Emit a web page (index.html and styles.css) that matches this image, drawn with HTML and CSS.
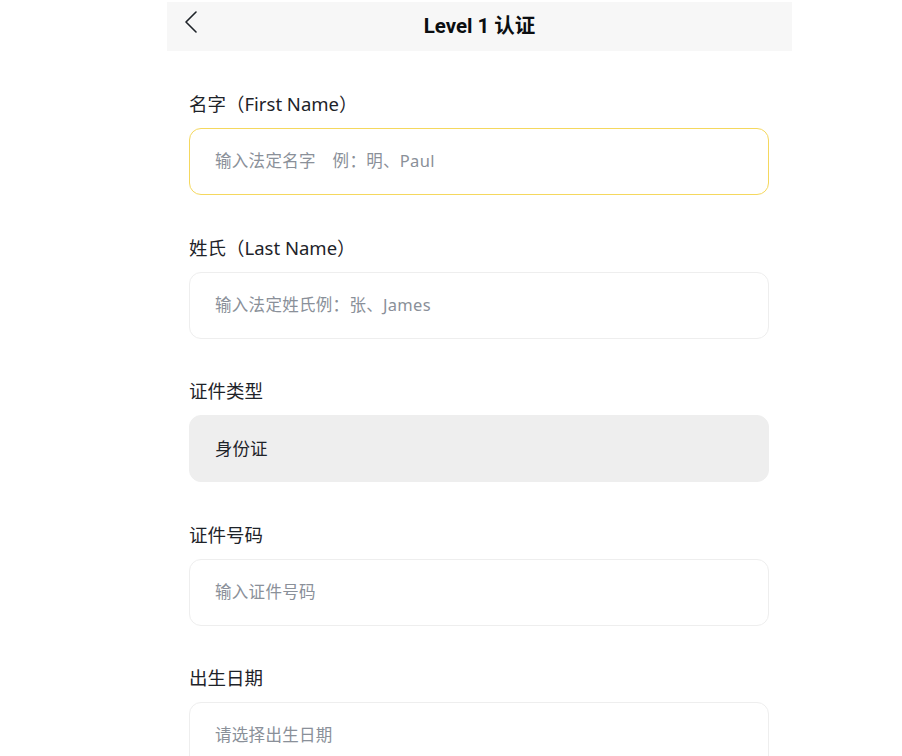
FILE: index.html
```html
<!DOCTYPE html>
<html lang="zh-CN">
<head>
<meta charset="utf-8">
<title>Level 1 认证</title>
<link rel="stylesheet" href="styles.css">
</head>
<body>
<div class="page">
  <header class="topbar">
    <button class="back" aria-label="返回">
      <svg width="14" height="22" viewBox="0 0 14 22"><path d="M12 1 L2 11 L12 21" fill="none" stroke="#1e2329" stroke-width="1.6" stroke-linecap="round" stroke-linejoin="round"/></svg>
    </button>
    <h1 class="title">Level 1 认证</h1>
  </header>
  <form class="form">
    <div class="field">
      <label class="label">名字（First Name）</label>
      <div class="input focused"><span class="ph">输入法定名字&emsp;例：明、Paul</span></div>
    </div>
    <div class="field">
      <label class="label">姓氏（Last Name）</label>
      <div class="input"><span class="ph">输入法定姓氏例：张、James</span></div>
    </div>
    <div class="field">
      <label class="label">证件类型</label>
      <div class="input select"><span class="val">身份证</span></div>
    </div>
    <div class="field">
      <label class="label">证件号码</label>
      <div class="input"><span class="ph">输入证件号码</span></div>
    </div>
    <div class="field">
      <label class="label">出生日期</label>
      <div class="input"><span class="ph">请选择出生日期</span></div>
    </div>
  </form>
</div>
</body>
</html>
```
FILE: styles.css
```css
* { box-sizing: border-box; }
html, body { margin: 0; padding: 0; background: #fff; }
body {
  font-family: "Noto Sans", "Noto Sans CJK SC", sans-serif;
  color: #1e2329;
  overflow: hidden;
}
.page {
  width: 625px;
  margin-left: 167px;
  padding-top: 2px;
}
.topbar {
  position: relative;
  height: 49px;
  background: #f7f7f7;
  display: flex;
  align-items: center;
  justify-content: center;
  padding-bottom: 6px;
}
.back {
  position: absolute;
  left: 17px;
  top: 9px;
  padding: 0;
  border: 0;
  background: none;
  width: 14px;
  height: 22px;
  display: flex;
}
.title {
  margin: 0;
  font-family: Roboto, "Noto Sans CJK SC", sans-serif;
  font-size: 20.5px;
  font-weight: 700;
  color: #0b0e11;
}
.form {
  padding: 41px 23px 0 22px;
  display: flex;
  flex-direction: column;
  gap: 40.5px;
}
.field {
  display: flex;
  flex-direction: column;
  gap: 12px;
}
.label {
  font-size: 18.5px;
  line-height: 24px;
  color: #1e2329;
}
.input {
  height: 67px;
  border: 1px solid #eeeeee;
  border-radius: 12px;
  display: flex;
  align-items: center;
  padding-left: 25px;
  padding-bottom: 3px;
  font-size: 16.5px;
}
.input.focused { border-color: #f5d85e; }
.input.select { background: #eeeeee; border-color: #eeeeee; padding-bottom: 2px; }
.ph { color: #8a9099; letter-spacing: 0.3px; }
.val { color: #1e2329; font-size: 17.5px; }
```
